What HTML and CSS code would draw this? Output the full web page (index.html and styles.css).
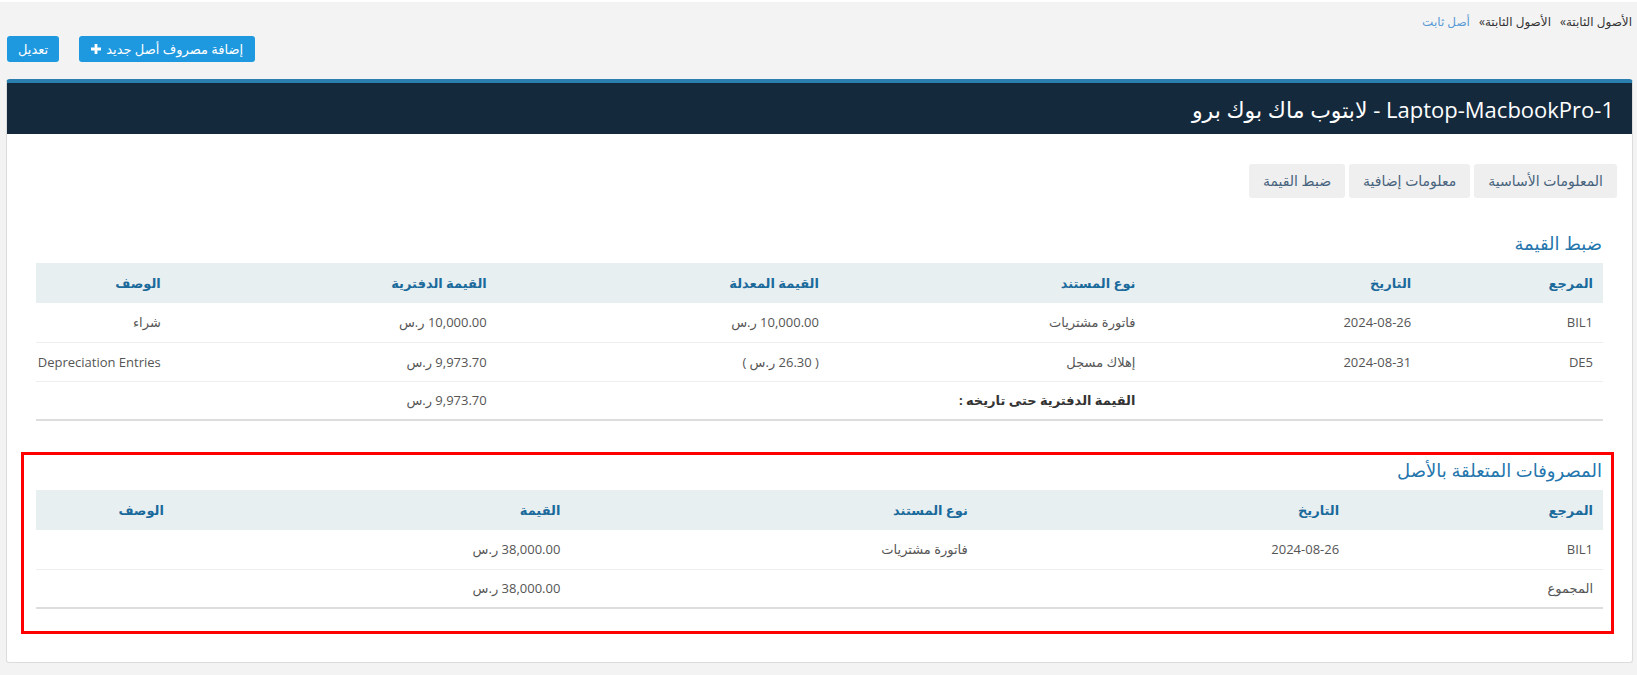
FILE: index.html
```html
<!DOCTYPE html>
<html lang="ar" dir="rtl">
<head>
<meta charset="utf-8">
<title>أصل ثابت</title>
<link rel="stylesheet" href="styles.css">
</head>
<body>
<div class="page">
  <div class="breadcrumb">
    <span class="crumb">الأصول الثابتة»</span>
    <span class="crumb">الأصول الثابتة»</span>
    <span class="crumb current">أصل ثابت</span>
  </div>
  <div class="actions">
    <button class="btn btn-add">إضافة مصروف أصل جديد
      <svg class="plus" viewBox="0 0 10 10" width="10" height="10"><path d="M3.6 0h2.8v3.6H10v2.8H6.4V10H3.6V6.4H0V3.6h3.6z" fill="#fff"/></svg>
    </button>
    <button class="btn btn-edit">تعديل</button>
  </div>

  <div class="card">
    <div class="card-head">
      <h1 class="card-title">Laptop-MacbookPro-1 - لابتوب ماك بوك برو</h1>
    </div>
    <div class="card-body">
      <div class="tabs">
        <span class="tab">المعلومات الأساسية</span>
        <span class="tab">معلومات إضافية</span>
        <span class="tab">ضبط القيمة</span>
      </div>

      <section class="block">
        <h2 class="block-title">ضبط القيمة</h2>
        <table class="grid grid-adjust">
          <colgroup>
            <col class="a-ref"><col class="a-date"><col class="a-type"><col class="a-adj"><col class="a-book"><col class="a-desc">
          </colgroup>
          <thead>
            <tr><th>المرجع</th><th>التاريخ</th><th>نوع المستند</th><th>القيمة المعدلة</th><th>القيمة الدفترية</th><th>الوصف</th></tr>
          </thead>
          <tbody>
            <tr><td>BIL1</td><td>2024-08-26</td><td>فاتورة مشتريات</td><td>10,000.00 ر.س</td><td>10,000.00 ر.س</td><td>شراء</td></tr>
            <tr><td>DE5</td><td>2024-08-31</td><td>إهلاك مسجل</td><td>( 26.30 ر.س )</td><td>9,973.70 ر.س</td><td>Depreciation Entries</td></tr>
            <tr class="total"><td></td><td></td><td class="strong">القيمة الدفترية حتى تاريخه :</td><td></td><td>9,973.70 ر.س</td><td></td></tr>
          </tbody>
        </table>
      </section>

      <section class="block highlight">
        <h2 class="block-title">المصروفات المتعلقة بالأصل</h2>
        <table class="grid grid-exp">
          <colgroup>
            <col class="e-ref"><col class="e-date"><col class="e-type"><col class="e-val"><col class="e-desc">
          </colgroup>
          <thead>
            <tr><th>المرجع</th><th>التاريخ</th><th>نوع المستند</th><th>القيمة</th><th>الوصف</th></tr>
          </thead>
          <tbody>
            <tr><td>BIL1</td><td>2024-08-26</td><td>فاتورة مشتريات</td><td>38,000.00 ر.س</td><td></td></tr>
            <tr class="total"><td>المجموع</td><td></td><td></td><td>38,000.00 ر.س</td><td></td></tr>
          </tbody>
        </table>
      </section>
    </div>
  </div>
</div>
</body>
</html>
```
FILE: styles.css
```css
* { box-sizing: border-box; }
html, body { margin: 0; padding: 0; }
body {
  background: #f3f3f3;
  font-family: "Open Sans", "DejaVu Sans", sans-serif;
  color: #555;
  font-size: 13px;
  border-top: 2px solid #fff;
  height: 675px;
  overflow: hidden;
}
.page { padding: 0 4px 0 4px; }

.breadcrumb {
  height: 34px;
  padding: 10px 1px 0 0;
  font-size: 12px;
  line-height: 20px;
  color: #333;
  display: flex;
  gap: 9px;
}
.crumb.current { color: #5b9bd5; }

.actions {
  display: flex;
  justify-content: flex-end;
  gap: 20px;
  padding-left: 3px;
  height: 43px;
}
.btn {
  height: 26px;
  background: #1e98de;
  color: #fff;
  border: 0;
  border-radius: 3px;
  font-family: inherit;
  font-size: 13px;
  padding: 0 11px;
  display: flex;
  align-items: center;
  gap: 5px;
}
.btn-add { padding: 0 12px 0 12px; }
.plus { display: block; }

.card {
  background: #fff;
  border: 1px solid #dcdcdc;
  border-top: 4px solid #2a7fae;
  border-radius: 4px 4px 3px 3px;
  margin-left: 2px;
  height: 584px;
}
.card-head {
  background: #15293d;
  height: 51px;
  display: flex;
  align-items: center;
  padding: 0 18px;
}
.card-title {
  margin: 0;
  color: #fff;
  font-weight: normal;
  font-size: 22px;
}
.card-body { padding: 30px 29px 0 29px; }

.tabs {
  display: flex;
  gap: 4px;
  margin-right: -14px;
}
.tab {
  height: 34px;
  line-height: 34px;
  padding: 0 14px;
  background: #efefef;
  border-radius: 3px;
  color: #46627c;
  font-size: 14px;
}

.block-title {
  margin: 0;
  font-weight: normal;
  font-size: 18px;
  color: #2476ad;
  line-height: 24px;
  padding-right: 1px;
}
.block { margin-top: 33px; }
.block .block-title { margin-bottom: 8px; }

.grid {
  width: 100%;
  border-collapse: collapse;
  table-layout: fixed;
}
.grid th {
  background: #e8eff1;
  color: #1b6a9c;
  font-weight: bold;
  text-align: right;
  height: 40px;
  padding: 0 10px;
  font-size: 13px;
}
.grid td {
  height: 39px;
  padding: 0 10px;
  text-align: right;
  border-bottom: 1px solid #eeeeee;
  white-space: nowrap;
}
.grid tr.total td { border-bottom: 2px solid #dddddd; }
.grid td.strong { font-weight: bold; color: #333; }

.a-ref { width: 11.6%; }
.a-date { width: 17.6%; }
.a-type { width: 20.2%; }
.a-adj { width: 21.2%; }
.a-book { width: 20.8%; }
.a-desc { width: 8.6%; }

.highlight {
  margin: 31px -11px 0 -15px;
  border: 3px solid #ff0000;
  padding: 0 8px 22px 12px;
}
.highlight .block-title { padding-top: 3px; margin-bottom: 8px; }

.e-ref { width: 16.2%; }
.e-date { width: 23.7%; }
.e-type { width: 26%; }
.e-val { width: 25.3%; }
.e-desc { width: 8.8%; }
```
